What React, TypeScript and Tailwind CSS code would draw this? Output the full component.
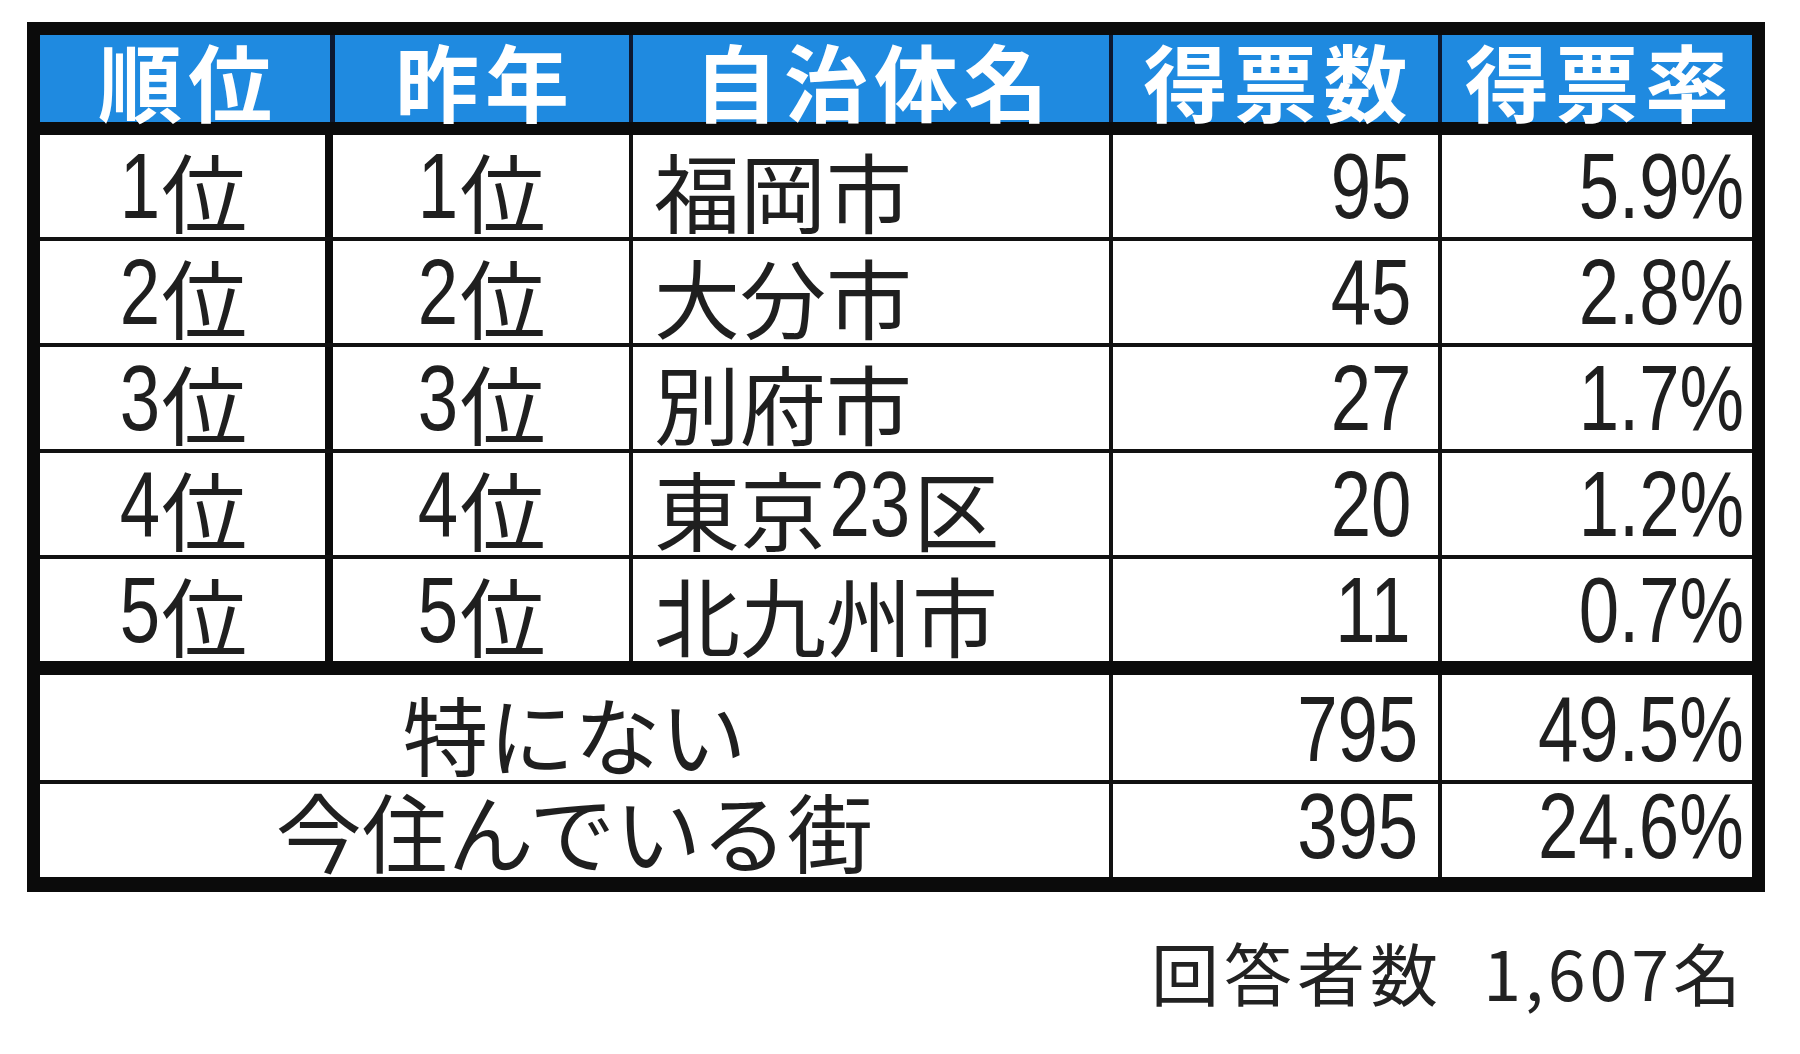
import React from 'react';

const jp = "font-['Noto_Sans_CJK_JP','Noto_Sans',sans-serif]";
const num = "font-['Liberation_Sans_Narrow','Arial_Narrow','Liberation_Sans','Noto_Sans_CJK_JP',sans-serif] text-[93px] inline-block scale-x-[0.78]";

// wrap digit runs so they get the narrow latin face, kanji stays in Noto CJK
function Mixed({ text }: { text: string }) {
  const parts = text.split(/([0-9.,%]+)/).filter(Boolean);
  return (
    <>
      {parts.map((p, i) =>
        /^[0-9.,%]+$/.test(p) ? (
          <span key={i} className={`${num} origin-center ${p.length > 1 ? '-mx-[8px]' : '-mx-[4px]'}`}>
            {p}
          </span>
        ) : (
          <span key={i}>{p}</span>
        )
      )}
    </>
  );
}

const ranking = [
  { rank: '1位', last: '1位', city: '福岡市', votes: '95', rate: '5.9%' },
  { rank: '2位', last: '2位', city: '大分市', votes: '45', rate: '2.8%' },
  { rank: '3位', last: '3位', city: '別府市', votes: '27', rate: '1.7%' },
  { rank: '4位', last: '4位', city: '東京23区', votes: '20', rate: '1.2%' },
  { rank: '5位', last: '5位', city: '北九州市', votes: '11', rate: '0.7%' },
];

const others = [
  { label: '特にない', votes: '795', rate: '49.5%', h: 'h-[105px]' },
  { label: '今住んでいる街', votes: '395', rate: '24.6%', h: 'h-[93px]' },
];

const cell = 'flex items-end pb-[4px] leading-none';

export default function App() {
  return (
    <div className={`w-full h-[1054px] bg-white pt-[22px] pl-[27px] text-[#1f1f1f] ${jp}`}>
      <div className="w-[1738px] border-[13px] border-b-[15px] border-[#0b0b0b]">
        {/* header */}
        <div className="flex h-[87px] bg-[#1f8ae0] border-b-[13px] border-[#0b0b0b] box-content text-white font-bold text-[84px] leading-none">
          <div className="w-[290px] flex items-end justify-center pl-[6px] tracking-[6px]">順位</div>
          <div className="w-[299px] border-l-[5px] border-[#0d1830] flex items-end justify-center pl-[6px] tracking-[6px]">昨年</div>
          <div className="w-[480px] border-l-[4px] border-[#0d1830] flex items-end justify-center pl-[6px] tracking-[6px]">自治体名</div>
          <div className="w-[329px] border-l-[4px] border-[#0d1830] flex items-end justify-center pl-[6px] tracking-[6px]">得票数</div>
          <div className="w-[314px] border-l-[4px] border-[#0d1830] flex items-end justify-center pl-[6px] tracking-[6px]">得票率</div>
        </div>

        {/* top five */}
        <div className="text-[86px]">
          {ranking.map((r, i) => (
            <div
              key={r.rank}
              className={`flex h-[102px] box-content ${i > 0 ? 'border-t-[4px] border-[#111]' : ''}`}
            >
              <div className={`${cell} w-[285px] justify-center`}>
                <Mixed text={r.rank} />
              </div>
              <div className={`${cell} w-[304px] border-l-[8px] border-[#0b0b0b] justify-center`}>
                <Mixed text={r.last} />
              </div>
              <div className={`${cell} w-[480px] border-l-[4px] border-[#111] pl-[21px]`}>
                <Mixed text={r.city} />
              </div>
              <div className={`${cell} w-[329px] border-l-[4px] border-[#111] justify-end pr-[27px]`}>
                <span className={`${num} origin-right`}>{r.votes}</span>
              </div>
              <div className={`${cell} w-[314px] border-l-[4px] border-[#111] justify-end pr-[8px]`}>
                <span className={`${num} origin-right`}>{r.rate}</span>
              </div>
            </div>
          ))}
        </div>

        {/* other answers */}
        <div className="border-t-[14px] border-[#0b0b0b] text-[86px]">
          {others.map((o, i) => (
            <div
              key={o.label}
              className={`flex ${o.h} box-content ${i > 0 ? 'border-t-[4px] border-[#111]' : ''}`}
            >
              <div className={`${cell} w-[1069px] justify-center`}>{o.label}</div>
              <div className={`${cell} w-[329px] border-l-[4px] border-[#111] justify-end pr-[20px]`}>
                <span className={`${num} origin-right`}>{o.votes}</span>
              </div>
              <div className={`${cell} w-[314px] border-l-[4px] border-[#111] justify-end pr-[8px]`}>
                <span className={`${num} origin-right`}>{o.rate}</span>
              </div>
            </div>
          ))}
        </div>
      </div>

      <div className="w-[1738px] flex justify-end pr-[20px] mt-[46px] text-[68px] leading-none text-[#222]">
        <span className="tracking-[5px]">回答者数</span>
        <span className="ml-[40px] tracking-[4px]">1,607名</span>
      </div>
    </div>
  );
}
